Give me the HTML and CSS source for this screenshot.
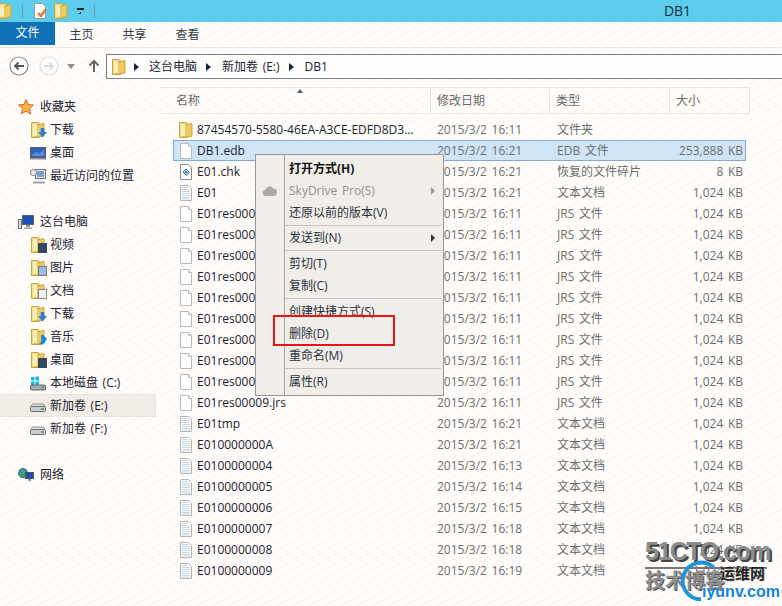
FILE: index.html
```html
<!DOCTYPE html>
<html lang="zh-CN">
<head>
<meta charset="utf-8">
<title>DB1</title>
<link rel="stylesheet" href="styles.css">
</head>
<body>
<svg class="defs" xmlns="http://www.w3.org/2000/svg">
  <symbol id="folder" viewBox="0 0 16 16">
    <path d="M1.500 .5h7l1 1v14h-8z" fill="#f3dc86" stroke="#c9a440"/>
    <path d="M5 3.500l9-2v12.500l-9 1.500z" fill="#eec95f" stroke="#c9a440"/>
    <path d="M3 2h4v12H3z" fill="#fbeeb8"/>
  </symbol>
  <symbol id="file" viewBox="0 0 16 16">
    <path d="M2.500 .5h8l3 3v12h-11z" fill="#fefefe" stroke="#b9b9b9"/>
    <path d="M10.500 .5v3h3" fill="#f0f0f0" stroke="#b9b9b9"/>
  </symbol>
  <symbol id="text" viewBox="0 0 16 16">
    <path d="M2.500 .5h8l3 3v12h-11z" fill="#fefefe" stroke="#b4b4b4"/>
    <path d="M4 2.500h6M4 4.500h8M4 6.500h8M4 8.500h8M4 10.500h8M4 12.500h8M4 14h8" stroke="#c6d5e4"/>
  </symbol>
  <symbol id="chk" viewBox="0 0 16 16">
    <path d="M2.500 .5h8l3 3v12h-11z" fill="#fff" stroke="#8c8c8c"/>
    <path d="M5 8l3-3 3.500 3.500-3 3z" fill="#cfe0f2" stroke="#3f6ea8"/>
    <circle cx="8" cy="8.200" r="1.200" fill="#3f6ea8"/>
  </symbol>
  <symbol id="star" viewBox="0 0 16 16">
    <path d="M8 .5l2.200 5 5.300.5-4 3.600 1.200 5.400L8 12.200 3.300 15l1.200-5.400-4-3.600 5.300-.5z" fill="#f7b64b" stroke="#d8662a"/>
  </symbol>
  <symbol id="desktop" viewBox="0 0 16 16">
    <rect x=".5" y="2.500" width="15" height="10" fill="#2f62b8" stroke="#59606b"/>
    <path d="M2 10l4-3 3 2 5-4v6H2z" fill="#5f8fd8"/>
    <path d="M0 13h16v1.500H0z" fill="#8a919b"/>
  </symbol>
  <symbol id="recent" viewBox="0 0 16 16">
    <rect x="5.500" y="1.500" width="10" height="9" fill="#e4e8ee" stroke="#6a7078"/>
    <rect x="7" y="3" width="7" height="6" fill="#7c9dc4"/>
    <path d="M3 13.500h12v2H3z" fill="#9ba2ab"/>
    <circle cx="3.500" cy="4.500" r="3" fill="#eee" stroke="#777"/>
  </symbol>
  <symbol id="pc" viewBox="0 0 16 16">
    <rect x="4.500" y="1.500" width="11" height="9" fill="#1f4fb0" stroke="#5a6068"/>
    <rect x="8" y="11" width="4" height="2" fill="#8b9199"/>
    <path d="M6 13.500h8v1.500H6z" fill="#9ba2ab"/>
    <rect x=".5" y="5.500" width="3" height="9" fill="#d8dce2" stroke="#6d737a"/>
  </symbol>
  <symbol id="drive" viewBox="0 0 16 16">
    <path d="M1 8.500l1.500-2.500h11l1.500 2.500" fill="#e3e3e3" stroke="#8b8b8b"/>
    <rect x=".5" y="8.500" width="15" height="5" rx="1" fill="#c9cbce" stroke="#6e7175"/>
    <rect x="11" y="10" width="3" height="2" fill="#54b05a"/>
  </symbol>
  <symbol id="sysdrive" viewBox="0 0 16 16">
    <path d="M1 2h3.500v3.500H1zM5.500 1.500H9v4H5.500zM1 6.500h3.500V10H1zM5.500 6.500H9V10H5.500z" fill="#19b6ee"/>
    <rect x=".5" y="10" width="15" height="5" rx="1" fill="#a9adb2" stroke="#5f6368"/>
    <rect x="11" y="11.500" width="3" height="2" fill="#54b05a"/>
  </symbol>
  <symbol id="net" viewBox="0 0 16 16">
    <circle cx="5" cy="6" r="4.500" fill="#3aa357" stroke="#1e6a9e"/>
    <path d="M2 5l3-3 2 2-3 3z" fill="#3f8fd8"/>
    <rect x="7.500" y="5.500" width="8" height="6" fill="#1f4fb0" stroke="#555"/>
    <path d="M10.500 12h2v2h-2z" fill="#777"/>
  </symbol>
  <symbol id="cloud" viewBox="0 0 16 16">
    <path d="M4 13a3 3 0 0 1-.500-6 4 4 0 0 1 7.500-1.500A3.800 3.800 0 0 1 12 13z" fill="#a9a9a9"/>
  </symbol>
</svg>

<div class="window">
  <header class="titlebar">
    <div class="qat">
      <svg class="ic ic-cut"><use href="#folder"/></svg>
      <span class="qat-sep"></span>
      <svg class="ic ic-doc" viewBox="0 0 16 16"><path d="M2.500 .5h8l3 3v12h-11z" fill="#fff" stroke="#999"/><path d="M6 10l3 3 5-7" fill="none" stroke="#e8703a" stroke-width="2.400"/></svg>
      <svg class="ic"><use href="#folder"/></svg>
      <span class="qat-drop"></span>
      <span class="qat-sep"></span>
    </div>
    <div class="title">DB1</div>
  </header>

  <nav class="ribbon">
    <span class="tab tab-file">文件</span>
    <span class="tab">主页</span>
    <span class="tab">共享</span>
    <span class="tab">查看</span>
  </nav>

  <div class="addressrow">
    <div class="navbtns">
      <svg class="round" viewBox="0 0 20 20"><circle cx="10" cy="10" r="9" fill="#fff" stroke="#8a8a8a" stroke-width="1.200"/><path d="M15 10H6M9.500 6.500L6 10l3.500 3.500" fill="none" stroke="#555" stroke-width="1.800"/></svg>
      <svg class="round" viewBox="0 0 20 20"><circle cx="10" cy="10" r="9" fill="#fff" stroke="#dedede" stroke-width="1.200"/><path d="M5 10h9M10.500 6.500L14 10l-3.500 3.500" fill="none" stroke="#d8d8d8" stroke-width="1.800"/></svg>
      <span class="nav-drop"></span>
      <svg class="up" viewBox="0 0 12 14"><path d="M6 13V2M1.500 6.500L6 2l4.500 4.500" fill="none" stroke="#666" stroke-width="2"/></svg>
    </div>
    <div class="addressbox">
      <svg class="ic"><use href="#folder"/></svg>
      <span class="crumb-arrow first"></span><span class="crumb">这台电脑</span>
      <span class="crumb-arrow"></span><span class="crumb">新加卷 (E:)</span>
      <span class="crumb-arrow"></span><span class="crumb">DB1</span>
    </div>
  </div>

  <div class="main">
    <aside class="tree">
      <div class="node top"><svg class="ic"><use href="#star"/></svg>收藏夹</div>
      <div class="node"><span class="badged"><svg class="ic"><use href="#folder"/></svg><i class="b b-down"></i></span>下载</div>
      <div class="node"><svg class="ic"><use href="#desktop"/></svg>桌面</div>
      <div class="node"><svg class="ic"><use href="#recent"/></svg>最近访问的位置</div>
      <div class="node top gap"><svg class="ic"><use href="#pc"/></svg>这台电脑</div>
      <div class="node"><span class="badged"><svg class="ic"><use href="#folder"/></svg><i class="b b-film"></i></span>视频</div>
      <div class="node"><span class="badged"><svg class="ic"><use href="#folder"/></svg><i class="b b-pic"></i></span>图片</div>
      <div class="node"><span class="badged"><svg class="ic"><use href="#folder"/></svg><i class="b b-doc"></i></span>文档</div>
      <div class="node"><span class="badged"><svg class="ic"><use href="#folder"/></svg><i class="b b-down"></i></span>下载</div>
      <div class="node"><span class="badged"><svg class="ic"><use href="#folder"/></svg><i class="b b-music"></i></span>音乐</div>
      <div class="node"><span class="badged"><svg class="ic"><use href="#folder"/></svg><i class="b b-film"></i></span>桌面</div>
      <div class="node"><svg class="ic"><use href="#sysdrive"/></svg>本地磁盘 (C:)</div>
      <div class="node current"><svg class="ic"><use href="#drive"/></svg>新加卷 (E:)</div>
      <div class="node"><svg class="ic"><use href="#drive"/></svg>新加卷 (F:)</div>
      <div class="node top gap"><svg class="ic"><use href="#net"/></svg>网络</div>
    </aside>

    <section class="files">
      <div class="colhead">
        <span class="col col-name">名称<i class="sort"></i></span>
        <span class="col">修改日期</span>
        <span class="col">类型</span>
        <span class="col">大小</span>
      </div>
      <div class="rows">
        <div class="row"><span class="name"><svg class="ic"><use href="#folder"/></svg>87454570-5580-46EA-A3CE-EDFD8D3...</span><span>2015/3/2 16:11</span><span>文件夹</span><span class="size"></span></div>
        <div class="row selected"><span class="name"><svg class="ic"><use href="#file"/></svg>DB1.edb</span><span>2015/3/2 16:21</span><span>EDB 文件</span><span class="size">253,888 KB</span></div>
        <div class="row"><span class="name"><svg class="ic"><use href="#chk"/></svg>E01.chk</span><span>2015/3/2 16:21</span><span>恢复的文件碎片</span><span class="size">8 KB</span></div>
        <div class="row"><span class="name"><svg class="ic"><use href="#text"/></svg>E01</span><span>2015/3/2 16:21</span><span>文本文档</span><span class="size">1,024 KB</span></div>
        <div class="row"><span class="name"><svg class="ic"><use href="#file"/></svg>E01res00000.jrs</span><span>2015/3/2 16:11</span><span>JRS 文件</span><span class="size">1,024 KB</span></div>
        <div class="row"><span class="name"><svg class="ic"><use href="#file"/></svg>E01res00001.jrs</span><span>2015/3/2 16:11</span><span>JRS 文件</span><span class="size">1,024 KB</span></div>
        <div class="row"><span class="name"><svg class="ic"><use href="#file"/></svg>E01res00002.jrs</span><span>2015/3/2 16:11</span><span>JRS 文件</span><span class="size">1,024 KB</span></div>
        <div class="row"><span class="name"><svg class="ic"><use href="#file"/></svg>E01res00003.jrs</span><span>2015/3/2 16:11</span><span>JRS 文件</span><span class="size">1,024 KB</span></div>
        <div class="row"><span class="name"><svg class="ic"><use href="#file"/></svg>E01res00004.jrs</span><span>2015/3/2 16:11</span><span>JRS 文件</span><span class="size">1,024 KB</span></div>
        <div class="row"><span class="name"><svg class="ic"><use href="#file"/></svg>E01res00005.jrs</span><span>2015/3/2 16:11</span><span>JRS 文件</span><span class="size">1,024 KB</span></div>
        <div class="row"><span class="name"><svg class="ic"><use href="#file"/></svg>E01res00006.jrs</span><span>2015/3/2 16:11</span><span>JRS 文件</span><span class="size">1,024 KB</span></div>
        <div class="row"><span class="name"><svg class="ic"><use href="#file"/></svg>E01res00007.jrs</span><span>2015/3/2 16:11</span><span>JRS 文件</span><span class="size">1,024 KB</span></div>
        <div class="row"><span class="name"><svg class="ic"><use href="#file"/></svg>E01res00008.jrs</span><span>2015/3/2 16:11</span><span>JRS 文件</span><span class="size">1,024 KB</span></div>
        <div class="row"><span class="name"><svg class="ic"><use href="#file"/></svg>E01res00009.jrs</span><span>2015/3/2 16:11</span><span>JRS 文件</span><span class="size">1,024 KB</span></div>
        <div class="row"><span class="name"><svg class="ic"><use href="#text"/></svg>E01tmp</span><span>2015/3/2 16:21</span><span>文本文档</span><span class="size">1,024 KB</span></div>
        <div class="row"><span class="name"><svg class="ic"><use href="#text"/></svg>E010000000A</span><span>2015/3/2 16:21</span><span>文本文档</span><span class="size">1,024 KB</span></div>
        <div class="row"><span class="name"><svg class="ic"><use href="#text"/></svg>E0100000004</span><span>2015/3/2 16:13</span><span>文本文档</span><span class="size">1,024 KB</span></div>
        <div class="row"><span class="name"><svg class="ic"><use href="#text"/></svg>E0100000005</span><span>2015/3/2 16:14</span><span>文本文档</span><span class="size">1,024 KB</span></div>
        <div class="row"><span class="name"><svg class="ic"><use href="#text"/></svg>E0100000006</span><span>2015/3/2 16:15</span><span>文本文档</span><span class="size">1,024 KB</span></div>
        <div class="row"><span class="name"><svg class="ic"><use href="#text"/></svg>E0100000007</span><span>2015/3/2 16:18</span><span>文本文档</span><span class="size">1,024 KB</span></div>
        <div class="row"><span class="name"><svg class="ic"><use href="#text"/></svg>E0100000008</span><span>2015/3/2 16:18</span><span>文本文档</span><span class="size">1,024 KB</span></div>
        <div class="row"><span class="name"><svg class="ic"><use href="#text"/></svg>E0100000009</span><span>2015/3/2 16:19</span><span>文本文档</span><span class="size">1,024 KB</span></div>
      </div>
    </section>
  </div>

  <div class="menu">
    <div class="item strong">打开方式(H)</div>
    <div class="item disabled"><svg class="menu-ic"><use href="#cloud"/></svg>SkyDrive Pro(S)<i class="sub sub-off"></i></div>
    <div class="item">还原以前的版本(V)</div>
    <div class="sep sep-tight"></div>
    <div class="item">发送到(N)<i class="sub"></i></div>
    <div class="sep"></div>
    <div class="item">剪切(T)</div>
    <div class="item">复制(C)</div>
    <div class="sep"></div>
    <div class="item">创建快捷方式(S)</div>
    <div class="item">删除(D)</div>
    <div class="item">重命名(M)</div>
    <div class="sep"></div>
    <div class="item">属性(R)</div>
  </div>
  <div class="callout"></div>

  <div class="watermark">
    <div class="wm-main">51CTO.com</div>
    <div class="wm-rule"></div>
    <div class="wm-sub">技术博客</div>
    <svg class="wm-arc" viewBox="0 0 60 60"><path d="M46 12A24 24 0 1 0 30 54" fill="none" stroke="#1f93d8" stroke-width="5"/></svg>
    <div class="wm-cn">运维网</div>
    <div class="wm-url">iyunv.com</div>
  </div>
</div>
</body>
</html>
```
FILE: styles.css
```css
* { box-sizing: border-box; }
html, body { margin: 0; height: 100%; }
body {
  overflow: hidden;
  font: 12px/1 "Open Sans", "Noto Sans CJK SC", sans-serif;
  word-spacing: 1.5px;
  color: #1c2230;
}
.defs { display: none; }

.window {
  position: relative;
  width: 782px;
  height: 606px;
  overflow: hidden;
  display: flex;
  flex-direction: column;
  background-color: #fffdfb;
  background-image: repeating-linear-gradient(150deg, transparent 0 7px, #fdf3ea 7px 8px);
}

.ic { width: 16px; height: 16px; flex: none; display: block; }

.titlebar {
  height: 22px;
  flex: none;
  display: flex;
  align-items: center;
  background: #5dcdee;
}
.qat { display: flex; align-items: center; width: 600px; }
.ic-cut { margin-left: -3px; }
.qat-sep { width: 1px; height: 14px; background: #6f9aa8; margin: 0 0 0 9px; }
.ic-doc { margin-left: 9px; margin-right: 5px; }
.qat-drop {
  width: 7px; height: 6px; margin-left: 8px;
  border-top: 2px solid #222;
  background: linear-gradient(135deg, transparent 50%, #222 50%) 0 2px / 4px 4px no-repeat,
              linear-gradient(225deg, transparent 50%, #222 50%) 3px 2px / 4px 4px no-repeat;
}
.qat-drop + .qat-sep { margin-left: 10px; }
.title { font-size: 14px; width: 155px; text-align: center; color: #1b2a3c; }

.ribbon {
  height: 26px;
  flex: none;
  display: flex;
  align-items: stretch;
  border-bottom: 1px solid #e6e6e4;
  padding-bottom: 2px;
}
.tab { width: 53px; display: flex; align-items: center; justify-content: center; padding-top: 3px; color: #333c48; }
.tab-file { width: 55px; background: #1070b8; color: #fff; padding: 0 0 1px; }

.addressrow {
  flex: none;
  height: 33px;
  margin-top: 6px;
  display: flex;
  align-items: flex-start;
}
.navbtns { width: 106px; height: 24px; padding-left: 9px; display: flex; align-items: center; }
.round { width: 20px; height: 20px; margin-right: 10px; flex: none; }
.nav-drop { width: 0; height: 0; margin: 1px 0 0 -2px; border: 4px solid transparent; border-top: 5px solid #8b8b8b; border-bottom: 0; }
.up { width: 12px; height: 14px; margin-left: 13px; }
.addressbox {
  flex: 1;
  height: 25px;
  margin-right: -4px;
  border: 1px solid #7c7f84;
  background: #fffefd;
  display: flex;
  align-items: center;
  padding-left: 4px;
}
.crumb { color: #1c2230; }
.crumb-arrow { width: 0; height: 0; margin: 0 11px 0 9px; border: 4px solid transparent; border-left: 5px solid #16233c; border-right: 0; }
.crumb-arrow.first { margin: 0 10px 0 7px; }

.main { flex: 1; display: flex; min-height: 0; }

.tree { width: 160px; flex: none; padding-top: 8px; }
.node {
  height: 23px;
  display: flex;
  align-items: center;
  gap: 4px;
  padding-left: 30px;
}
.node.top { padding-left: 18px; gap: 6px; }
.node.gap { margin-top: 23px; }
.node.current { width: 156px; background: #f1ece6; border: 1px solid #e9e4de; border-left-width: 0; }
.badged { position: relative; display: block; }
.b { position: absolute; right: -1px; bottom: 0; width: 9px; height: 10px; }
.b-down { background: #2a7fd0; clip-path: polygon(30% 0, 70% 0, 70% 45%, 100% 45%, 50% 100%, 0 45%, 30% 45%); }
.b-film { background: #33475f; }
.b-pic { background: #9dbddd; border: 1px solid #777; }
.b-doc { background: #eef1f5; border: 1px solid #888; }
.b-music { background: #1f86d0; clip-path: polygon(35% 0, 55% 0, 100% 45%, 60% 100%, 10% 100%, 35% 70%); }

.files { flex: 1; min-width: 0; }
.colhead {
  width: 590px;
  height: 27px;
  display: grid;
  grid-template-columns: 271px 119px 120px 80px;
  border: 1px solid #ece7e2;
  border-left: 0;
  color: #6a6a6a;
}
.col { display: flex; align-items: center; padding-left: 6px; border-right: 1px solid #e6e2de; }
.col-name { position: relative; padding-left: 16px; }
.sort {
  position: absolute; top: 1px; left: 137px;
  width: 0; height: 0;
  border: 3px solid transparent; border-bottom: 4px solid #55606e; border-top: 0;
}

.rows { margin: 5px 0 0 13px; width: 573px; }
.row {
  height: 21px;
  display: grid;
  grid-template-columns: 257px 120px 120px 76px;
  align-items: center;
  color: #6d6d6d;
  white-space: nowrap;
}
.row > span { padding-left: 7px; }
.row > .name { display: flex; align-items: center; gap: 3px; padding-left: 5px; color: #1c2230; overflow: hidden; }
.row > .size { padding: 0 3px 0 0; text-align: right; }
.row.selected { background: #cfe5f7; box-shadow: inset 0 0 0 1px #86a8d4; }

.menu {
  position: absolute;
  left: 255px;
  top: 154px;
  width: 189px;
  height: 242px;
  padding: 3px 2px;
  background-color: #f1eee9;
  background-image: linear-gradient(#a5a3a4, #a5a3a4);
  background-size: 1px 100%;
  background-position: 28px 0;
  background-repeat: no-repeat;
  border: 1px solid #9a979a;
  color: #27303c;
}
.item {
  position: relative;
  height: 22px;
  display: flex;
  align-items: center;
  padding-left: 31px;
  white-space: nowrap;
}
.strong { font-weight: 700; color: #111; }
.disabled { color: #8f8f8f; }
.menu-ic { position: absolute; left: 4px; top: 3px; width: 16px; height: 16px; }
.sub {
  position: absolute; right: 6px; top: 7px;
  width: 0; height: 0;
  border: 4px solid transparent; border-left: 4px solid #333; border-right: 0;
}
.sub-off { border-left-color: #999; }
.sep { height: 1px; margin: 1px 0 2px 27px; background: #c4c1bf; }
.sep-tight { margin-bottom: 1px; }

.callout {
  position: absolute;
  left: 273px;
  top: 315px;
  width: 122px;
  height: 31px;
  border: 2px solid #e8141c;
}

.watermark { position: absolute; left: 640px; top: 536px; width: 142px; height: 70px; pointer-events: none; }
.wm-main {
  position: absolute; left: 5px; top: 3px;
  font: 700 25px/1 "Liberation Sans", sans-serif;
  letter-spacing: -1.500px;
  color: #8b8b8b;
  text-shadow: 2px 2px 0 #444;
  white-space: nowrap;
}
.wm-rule { position: absolute; left: 5px; top: 31px; width: 122px; height: 2px; background: #777; }
.wm-sub {
  position: absolute; left: 5px; top: 34px;
  font: 700 20px/1 "Noto Sans CJK SC", sans-serif;
  color: #8f8f8f;
  text-shadow: 1px 1px 0 #555;
  white-space: nowrap;
}
.wm-arc { position: absolute; left: 38px; top: 22px; width: 46px; height: 46px; }
.wm-cn {
  position: absolute; left: 80px; top: 29px;
  font: 700 15px/1 "Noto Sans CJK SC", sans-serif;
  color: #222;
  text-shadow: 1px 1px 0 #ddd;
  white-space: nowrap;
}
.wm-url {
  position: absolute; left: 62px; top: 48px;
  font: 700 16px/1 "Liberation Sans", sans-serif;
  color: #1186d6;
  white-space: nowrap;
}
```
